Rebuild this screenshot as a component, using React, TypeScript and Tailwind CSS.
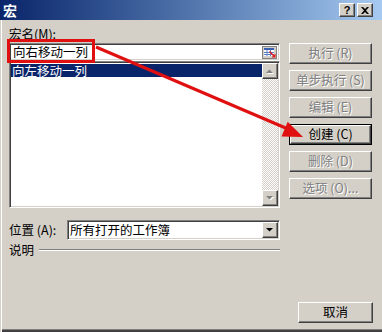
import React from 'react';

// classic 3D edges
const raised =
  'border border-t-white border-l-white border-r-[#404040] border-b-[#404040] shadow-[inset_-1px_-1px_0_#808080] bg-[#d4d0c8]';
const sunken =
  'border border-t-[#808080] border-l-[#808080] border-r-white border-b-white shadow-[inset_1px_1px_0_#404040,inset_-1px_-1px_0_#d4d0c8] p-px';
const disabledText = 'text-[#808080] [text-shadow:1px_1px_0_#fff]';

function Triangle({ dir, disabled }: { dir: 'up' | 'down'; disabled?: boolean }) {
  const pts = dir === 'up' ? '0,4 7,4 3.5,0.5' : '0,0 7,0 3.5,3.5';
  return (
    <svg width="8" height="5" viewBox="0 0 8 5" className="overflow-visible">
      {disabled && <polygon points={pts} fill="#fff" transform="translate(1,1)" />}
      <polygon points={pts} fill={disabled ? '#808080' : '#000'} />
    </svg>
  );
}

function SideButton({ label, disabled = true, isDefault = false }: { label: string; disabled?: boolean; isDefault?: boolean }) {
  const inner = (
    <div className={`${raised} w-full h-full flex items-center justify-center leading-none`}>
      <span className={`whitespace-pre ${disabled ? disabledText : 'text-black'}`}>{label}</span>
    </div>
  );
  return isDefault ? (
    <div className="h-[21px] border border-black">{inner}</div>
  ) : (
    <div className="h-[21px]">{inner}</div>
  );
}

function RefEditIcon() {
  return (
    <svg width="15" height="13" viewBox="0 0 15 13">
      <rect x="0.5" y="0.5" width="14" height="12" fill="#d4d0c8" stroke="#808080" />
      <rect x="2" y="2" width="10" height="2" fill="#3a5fae" />
      <rect x="2" y="4" width="10" height="6" fill="#fff" />
      <path d="M2 6.5H12M2 8.5H12M5 4V10M8.5 4V10" stroke="#5b7fc7" strokeWidth="1" />
      <path d="M8 5 L12 9 L13.5 7.5 L13.5 11.5 L9.5 11.5 L11 10 L7 6 Z" fill="#e01818" />
    </svg>
  );
}

export default function App() {
  return (
    <div className="relative w-[382px] h-[332px] overflow-hidden bg-[#d4d0c8] flex flex-col font-['Noto_Sans_CJK_SC',sans-serif] text-[12.5px] text-black">
      {/* 标题栏 */}
      <div className="h-[20px] shrink-0 flex items-center bg-linear-to-r from-[#0a246a] to-[#a6caf0] pl-[3px] pr-[9px]">
        <span className="text-white font-bold text-[14px] leading-none">宏</span>
        <div className="ml-auto flex gap-[2px]">
          <div className={`${raised} w-[16px] h-[14px] flex items-center justify-center`}>
            <span className="font-['Liberation_Sans',sans-serif] font-bold text-[11px] leading-none">?</span>
          </div>
          <div className={`${raised} w-[16px] h-[14px] flex items-center justify-center`}>
            <svg width="8" height="7" viewBox="0 0 8 7">
              <path d="M0 0H2L4 2L6 0H8L5 3.5L8 7H6L4 5L2 7H0L3 3.5Z" fill="#000" />
            </svg>
          </div>
        </div>
      </div>

      {/* 主体 */}
      <div className="flex-1 flex flex-col px-[9px] pb-[9px] shadow-[inset_1px_0_0_#d4d0c8,inset_2px_0_0_#fff,inset_0_-2px_0_#404040,inset_0_-3px_0_#808080]">
        <div className="mt-[7px] h-[14px] leading-[14px]">宏名(M):</div>

        <div className="mt-[2px] flex gap-[9px] items-start">
          {/* 左列 */}
          <div className="w-[271px] flex flex-col">
            <div className={`${sunken} h-[18px]`}>
              <div className="h-full bg-white flex items-center pl-[2px] pr-[1px]">
                <span className="leading-none">向右移动一列</span>
                <div className="ml-auto flex">
                  <RefEditIcon />
                </div>
              </div>
            </div>

            <div className={`${sunken} h-[147px] flex`}>
              <div className="flex-1 bg-white pt-px">
                <div className="h-[13px] bg-[#0a246a] text-white leading-[13px] pl-px">向左移动一列</div>
              </div>
              <div className="w-[16px] flex flex-col">
                <div className={`${raised} h-[16px] flex items-center justify-center`}>
                  <Triangle dir="up" disabled />
                </div>
                <div className="flex-1 [background-image:repeating-conic-gradient(#fff_0_25%,#d4d0c8_0_50%)] [background-size:2px_2px]" />
                <div className={`${raised} h-[16px] flex items-center justify-center`}>
                  <Triangle dir="down" disabled />
                </div>
              </div>
            </div>

            <div className="mt-[12px] flex items-center">
              <div className="w-[58px] leading-[14px] whitespace-pre">位置 (A):</div>
              <div className={`${sunken} flex-1 h-[20px]`}>
                <div className="h-full bg-white flex items-center pl-[1px]">
                  <span className="leading-none">所有打开的工作簿</span>
                  <div className={`${raised} ml-auto w-[16px] h-full flex items-center justify-center`}>
                    <Triangle dir="down" />
                  </div>
                </div>
              </div>
            </div>

            <div className="mt-[3px] h-[14px] flex items-center">
              <span className="leading-[14px]">说明</span>
              <div className="flex-1 ml-[5px] border-t border-t-[#808080] border-b border-b-white" />
            </div>
          </div>

          {/* 右列按钮 */}
          <div className="w-[83px] flex flex-col gap-[6px]">
            <SideButton label="执行 (R)" />
            <SideButton label="单步执行 (S)" />
            <SideButton label="编辑 (E)" />
            <SideButton label="创建 (C)" disabled={false} isDefault />
            <SideButton label="删除 (D)" />
            <SideButton label="选项 (O)..." />
          </div>
        </div>

        <div className="mt-auto flex justify-end">
          <div className={`${raised} w-[75px] h-[21px] flex items-center justify-center leading-none`}>取消</div>
        </div>
      </div>

      {/* 标注：红框与箭头 */}
      <div className="absolute left-[7px] top-[39px] w-[88px] h-[24px] border-[3px] border-[#e01010] pointer-events-none" />
      <svg className="absolute left-0 top-0 pointer-events-none" width="382" height="332" viewBox="0 0 382 332">
        <line x1="96" y1="47" x2="288" y2="129" stroke="#e01010" strokeWidth="3" />
        <polygon points="303,137 281.5,136.6 287.7,121.8" fill="#e01010" />
      </svg>
    </div>
  );
}
